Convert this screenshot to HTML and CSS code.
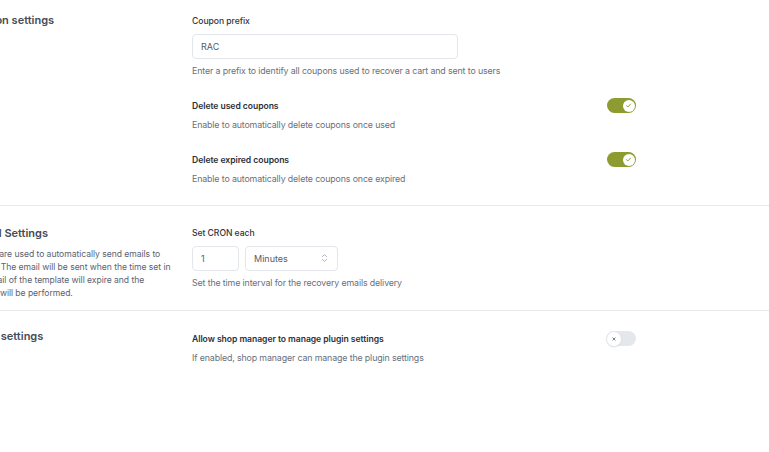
FILE: index.html
```html
<!DOCTYPE html>
<html lang="en">
<head>
<meta charset="utf-8">
<title>Settings</title>
<link rel="stylesheet" href="styles.css">
</head>
<body>
<div class="page">
  <section class="section s1">
    <div class="side">
      <h2 class="title">Coupon settings</h2>
    </div>
    <div class="main">
      <div class="field">
        <label class="label">Coupon prefix</label>
        <div class="input wide">RAC</div>
        <p class="help">Enter a prefix to identify all coupons used to recover a cart and sent to users</p>
      </div>
      <div class="field gap">
        <div class="row">
          <span class="label strong">Delete used coupons</span>
          <span class="toggle on"><span class="knob"><svg viewBox="0 0 10 10" width="7" height="7"><path d="M2.2 5.3 L4.1 7 L7.8 3" fill="none" stroke="#8d9b31" stroke-width="1.4" stroke-linecap="round" stroke-linejoin="round"/></svg></span></span>
        </div>
        <p class="help">Enable to automatically delete coupons once used</p>
      </div>
      <div class="field gap">
        <div class="row">
          <span class="label strong">Delete expired coupons</span>
          <span class="toggle on"><span class="knob"><svg viewBox="0 0 10 10" width="7" height="7"><path d="M2.2 5.3 L4.1 7 L7.8 3" fill="none" stroke="#8d9b31" stroke-width="1.4" stroke-linecap="round" stroke-linejoin="round"/></svg></span></span>
        </div>
        <p class="help">Enable to automatically delete coupons once expired</p>
      </div>
    </div>
  </section>
  <section class="section s2">
    <div class="side">
      <h2 class="title">Email Settings</h2>
      <p class="desc">Crons are used to automatically send emails to<br>users. &#8202;The email will be sent when the time set in<br>its detail of the template will expire and the<br>action will be performed.</p>
    </div>
    <div class="main">
      <div class="field">
        <label class="label">Set CRON each</label>
        <div class="inline">
          <div class="input num">1</div>
          <div class="input select">Minutes<svg class="chev" viewBox="0 0 10 14" width="7" height="10"><path d="M2 5 L5 2 L8 5 M2 9 L5 12 L8 9" fill="none" stroke="#9ca3af" stroke-width="1.2" stroke-linecap="round" stroke-linejoin="round"/></svg></div>
        </div>
        <p class="help">Set the time interval for the recovery emails delivery</p>
      </div>
    </div>
  </section>
  <section class="section s3">
    <div class="side">
      <h2 class="title">User settings</h2>
    </div>
    <div class="main">
      <div class="field">
        <div class="row">
          <span class="label strong">Allow shop manager to manage plugin settings</span>
          <span class="toggle off"><span class="knob"><svg viewBox="0 0 10 10" width="6" height="6"><path d="M3 3 L7 7 M7 3 L3 7" fill="none" stroke="#6b7280" stroke-width="1.5" stroke-linecap="round"/></svg></span></span>
        </div>
        <p class="help">If enabled, shop manager can manage the plugin settings</p>
      </div>
    </div>
  </section>
</div>
</body>
</html>
```
FILE: styles.css
```css
* { box-sizing: border-box; }
html, body { margin: 0; padding: 0; background: #ffffff; }
body {
  font-family: Inter, "Noto Sans", "Liberation Sans", sans-serif;
  color: #374151;
  overflow: hidden;
}
.page {
  margin-left: -27px;
}
.section {
  display: grid;
  grid-template-columns: 219px 444px;
  border-bottom: 1px solid #e8eaee;
  padding-top: 19px;
  padding-bottom: 20px;
}
.s1 { padding-top: 14px; padding-bottom: 20px; }
.s2 { padding-top: 20px; padding-bottom: 10px; }
.s3 { padding-top: 18px; border-bottom: none; }
.title {
  margin: -1px 0 0;
  font-size: 11px;
  line-height: 16px;
  font-weight: 600;
  color: #454b57;
}
.s1 .title { margin-top: -2px; text-indent: -6px; }
.s2 .desc { margin-top: 6.5px; }
.desc {
  margin: 5.5px 0 0;
  font-size: 8.6px;
  line-height: 13px;
  letter-spacing: -0.05px;
  color: #5b6270;
}
.field { display: flex; flex-direction: column; }
.field.gap { margin-top: 21.5px; }
.label {
  display: block;
  font-size: 8.6px;
  line-height: 14px;
  font-weight: 500;
  letter-spacing: -0.05px;
  color: #2f3541;
}
.label.strong { font-weight: 600; color: #2a2f39; }
.input {
  margin-top: 5.5px;
  height: 25px;
  border: 1px solid #e3e6ea;
  border-radius: 4px;
  background: #fff;
  font-size: 9px;
  color: #555c69;
  display: flex;
  align-items: center;
  padding-left: 8px;
}
.input.wide { width: 266px; }
.inline { display: flex; gap: 6px; margin-top: 5.5px; }
.inline .input { margin-top: 0; }
.input.num { width: 47px; }
.input.select {
  width: 93px;
  justify-content: space-between;
  padding-right: 9px;
}
.chev { display: block; }
.help {
  margin: 5.5px 0 0;
  font-size: 8.8px;
  line-height: 13px;
  letter-spacing: -0.12px;
  color: #68707c;
}
.row {
  display: flex;
  align-items: center;
  justify-content: space-between;
  height: 14px;
}
.s3 .main { padding-top: 3px; }
.toggle {
  position: relative;
  width: 29px;
  height: 15px;
  border-radius: 8px;
  flex: none;
}
.toggle.on { background: #8d9b31; }
.toggle.off { background: #e4e7ec; }
.knob {
  position: absolute;
  top: 1.5px;
  width: 12px;
  height: 12px;
  border-radius: 50%;
  background: #fff;
  display: flex;
  align-items: center;
  justify-content: center;
}
.toggle.on .knob { right: 1.5px; }
.toggle.off .knob {
  left: 0;
  top: 0.5px;
  width: 14px;
  height: 14px;
  box-shadow: 0 0 0 1px #e2e5ea, 0 1px 2px rgba(0,0,0,0.12);
}
.knob svg { display: block; }
```
